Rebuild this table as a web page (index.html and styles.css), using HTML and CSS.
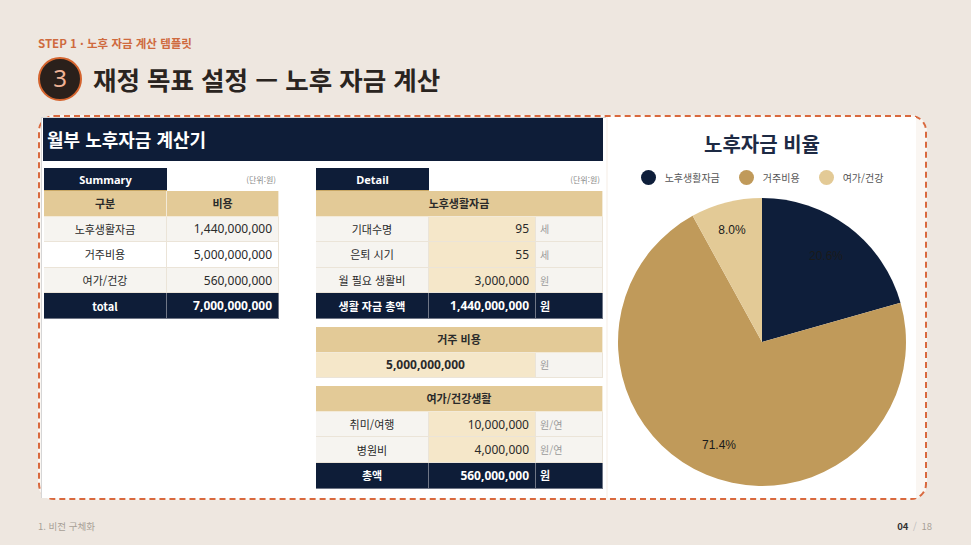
FILE: index.html
```html
<!DOCTYPE html>
<html lang="ko">
<head>
<meta charset="utf-8">
<title>재정 목표 설정 — 노후 자금 계산</title>
<link rel="stylesheet" href="styles.css">
</head>
<body>
<div class="page">
  <div class="step">STEP 1 · 노후 자금 계산 템플릿</div>
  <div class="title-row">
    <div class="badge">3</div>
    <h1 class="title">재정 목표 설정 — 노후 자금 계산</h1>
  </div>

  <div class="board">
    <div class="sheet">
      <div class="sheet-title">월부 노후자금 계산기</div>
      <div class="tables">
        <div class="summary">
          <div class="caption-row">
            <div class="cap-cell cap-sum">Summary</div>
            <div class="unit">(단위:원)</div>
          </div>
          <div class="grid sum-grid">
            <div class="c head">구분</div><div class="c head">비용</div>
            <div class="c lt">노후생활자금</div><div class="c lt num r">1,440,000,000</div>
            <div class="c wh">거주비용</div><div class="c wh num r">5,000,000,000</div>
            <div class="c lt">여가/건강</div><div class="c lt num r">560,000,000</div>
            <div class="c tot">total</div><div class="c tot num r">7,000,000,000</div>
          </div>
        </div>

        <div class="detail">
          <div class="caption-row">
            <div class="cap-cell cap-det">Detail</div>
            <div class="unit">(단위:원)</div>
          </div>
          <div class="grid det-grid">
            <div class="c head span3">노후생활자금</div>
            <div class="c lt">기대수명</div><div class="c bg num r">95</div><div class="c lt u">세</div>
            <div class="c lt">은퇴 시기</div><div class="c bg num r">55</div><div class="c lt u">세</div>
            <div class="c lt">월 필요 생활비</div><div class="c bg num r">3,000,000</div><div class="c lt u">원</div>
            <div class="c tot">생활 자금 총액</div><div class="c tot num r">1,440,000,000</div><div class="c tot ul">원</div>
          </div>

          <div class="grid det-grid block">
            <div class="c head span3">거주 비용</div>
            <div class="c bg num span2 strong">5,000,000,000</div><div class="c lt u">원</div>
          </div>

          <div class="grid det-grid block">
            <div class="c head span3">여가/건강생활</div>
            <div class="c lt">취미/여행</div><div class="c bg num r">10,000,000</div><div class="c lt u">원/연</div>
            <div class="c lt">병원비</div><div class="c bg num r">4,000,000</div><div class="c lt u">원/연</div>
            <div class="c tot">총액</div><div class="c tot num r">560,000,000</div><div class="c tot ul">원</div>
          </div>
        </div>
      </div>
    </div>

    <div class="chart">
      <div class="chart-title">노후자금 비율</div>
      <div class="legend">
        <div class="lg"><span class="dot d1"></span>노후생활자금</div>
        <div class="lg"><span class="dot d2"></span>거주비용</div>
        <div class="lg"><span class="dot d3"></span>여가/건강</div>
      </div>
      <svg class="pie" width="290" height="290" viewBox="0 0 290 290">
        <path d="M145,145 L145,1 A144,144 0 0 1 283.53,105.69 Z" fill="#0e1e3a"/>
        <path d="M145,145 L283.53,105.69 A144,144 0 1 1 75.62,18.81 Z" fill="#c09a5a"/>
        <path d="M145,145 L75.62,18.81 A144,144 0 0 1 145,1 Z" fill="#e3ca96"/>
        <text x="115" y="37" class="pl">8.0%</text>
        <text x="209" y="63" class="pl">20.6%</text>
        <text x="102" y="252" class="pl">71.4%</text>
      </svg>
    </div>
  </div>

  <div class="footer">
    <div class="foot-left">1. 비전 구체화</div>
    <div class="foot-right"><b>04</b> <span class="sep">/</span> 18</div>
  </div>
</div>
</body>
</html>
```

FILE: styles.css
```css
* { box-sizing: border-box; }
html, body { margin: 0; padding: 0; }
body {
  background: #eee7e0;
  font-family: "Noto Sans CJK KR", "Noto Sans", sans-serif;
  color: #2a2420;
}
.page {
  width: 971px;
  height: 545px;
  padding: 35px 44px 0 38px;
  overflow: hidden;
}
.step {
  font-size: 11.5px;
  font-weight: 700;
  line-height: 16px;
  color: #cf6a3e;
}
.title-row {
  display: flex;
  align-items: center;
  gap: 11px;
  margin-top: 6px;
  height: 44px;
}
.badge {
  width: 44px;
  height: 44px;
  border-radius: 50%;
  background: #2a201b;
  border: 2px solid #d4642e;
  color: #f0b295;
  font-size: 24px;
  line-height: 38px;
  text-align: center;
  font-family: "Noto Sans", sans-serif;
}
.title {
  margin: 0;
  font-size: 25.5px;
  font-weight: 700;
  color: #2a2420;
  line-height: 30px;
}

.board {
  margin-top: 14px;
  width: 889px;
  height: 385px;
  border: 2px dashed #d9693e;
  border-radius: 16px;
  background: #faf6f2;
  display: flex;
  gap: 2px;
  padding: 0 9px 0 1px;
}
.sheet {
  width: 565px;
  background: #fff;
  border-top: 1px solid #d6d6d6;
  border-left: 1px solid #d6d6d6;
  padding: 0 3px 0 1px;
}
.sheet-title {
  height: 43px;
  background: #0e1d38;
  color: #fff;
  font-size: 18px;
  font-weight: 700;
  line-height: 43px;
  padding-left: 4px;
}
.tables {
  display: flex;
  gap: 37px;
  margin-top: 7px;
  padding-left: 1px;
}
.caption-row {
  display: flex;
  justify-content: space-between;
  align-items: center;
  height: 23px;
}
.cap-cell {
  height: 23px;
  background: #0e1d38;
  color: #fff;
  font-family: "Noto Sans", sans-serif;
  font-weight: 700;
  font-size: 11px;
  line-height: 23px;
  text-align: center;
  border-bottom: 1px solid #c9a865;
}
.cap-sum { width: 123px; }
.cap-det { width: 113px; }
.unit {
  font-size: 8px;
  color: #888;
  padding-right: 3px;
}
.grid {
  display: grid;
  grid-auto-rows: 25.6px;
}
.sum-grid { grid-template-columns: 123px 112px; width: 235px; }
.det-grid { grid-template-columns: 113px 107px 67px; width: 287px; }
.block { margin-top: 8px; }
.c {
  font-size: 11px;
  display: flex;
  align-items: center;
  justify-content: center;
  border-right: 1px solid #ebe4d8;
  border-bottom: 1px solid #ebe4d8;
  color: #2a2a2a;
  white-space: nowrap;
}
.num { font-family: "Noto Sans", sans-serif; font-size: 12px; }
.r { justify-content: flex-end; padding-right: 6px; }
.head {
  background: #e3ca97;
  font-weight: 700;
  border-color: #f3ead8;
}
.lt { background: #f6f4f0; }
.wh { background: #fff; }
.bg { background: #f5e7c9; }
.tot {
  background: #0e1d38;
  color: #fff;
  font-weight: 700;
  border-right: 1px solid #6f7686;
  border-bottom: 1px solid #6f7686;
}
.u {
  justify-content: flex-start;
  padding-left: 4px;
  color: #9a9a9a;
  font-size: 10px;
}
.ul {
  justify-content: flex-start;
  padding-left: 4px;
}
.strong { font-weight: 700; }
.span3 { grid-column: span 3; }
.span2 { grid-column: span 2; }

.chart {
  width: 308px;
  background: #fff;
  display: flex;
  flex-direction: column;
  align-items: center;
  padding-top: 13px;
}
.chart-title {
  font-size: 20px;
  font-weight: 700;
  color: #1d2a44;
  line-height: 28px;
}
.legend {
  display: flex;
  gap: 19px;
  margin-top: 12px;
  height: 15px;
  align-items: center;
}
.lg {
  display: flex;
  align-items: center;
  gap: 9px;
  font-size: 10px;
  color: #555;
}
.dot {
  width: 15px;
  height: 15px;
  border-radius: 50%;
  display: inline-block;
}
.d1 { background: #0e1e3a; }
.d2 { background: #c09a5a; }
.d3 { background: #e3ca96; }
.pie { margin-top: 12px; display: block; }
.pl {
  font-family: "Liberation Sans", sans-serif;
  font-size: 12px;
  fill: #1a1a1a;
  text-anchor: middle;
}

.footer {
  display: flex;
  justify-content: space-between;
  align-items: center;
  margin-top: 19px;
  width: 894px;
  font-size: 9.5px;
  color: #a79f96;
}
.foot-right b { color: #333; font-weight: 700; }
.sep { color: #bbb; padding: 0 2px; }
```
